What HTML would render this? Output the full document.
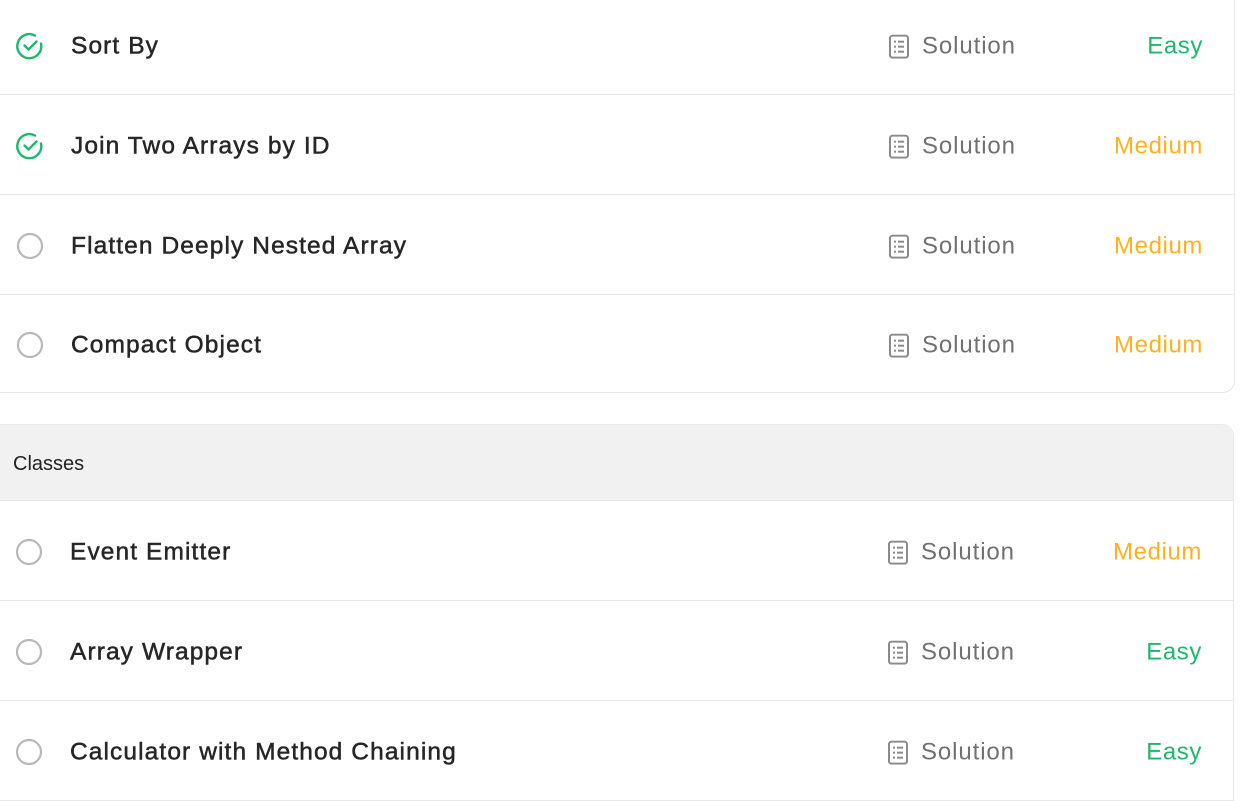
<!DOCTYPE html>
<html><head><style>
body{margin:0;width:1242px;height:790px;background:#fff;font-family:"Liberation Sans",sans-serif;overflow:hidden;position:relative}
.card{position:absolute;left:-2px;width:1235px;border:1px solid #e8e8e8;border-radius:0 0 12px 0;background:#fff}
.row{position:relative;height:99px;border-bottom:1px solid #e8e8e8}
.row:last-child{border-bottom:none}
.ic{position:absolute;left:17px;top:50%;margin-top:-13px}
.t{position:absolute;left:72px;top:50%;transform:translateY(-45%);font-size:24.5px;color:#262626;-webkit-text-stroke:0.5px #262626;letter-spacing:1.1px}
.sol{position:absolute;left:890px;top:50%;transform:translateY(-44%);font-size:24px;color:#707070;display:flex;align-items:center;letter-spacing:0.9px}
.sol svg{margin-right:13px}
.d{position:absolute;right:31px;top:50%;transform:translateY(-45%);font-size:24px;letter-spacing:0.6px}
.e{color:#1cb86b}.m{color:#ffb020}
.hd{height:75px;background:#f1f1f1;border-radius:0 12px 0 0;position:relative;border-bottom:1px solid #e8e8e8}
.hd span{position:absolute;left:15px;top:28px;font-size:20px;color:#222}
</style></head><body>
<svg width="0" height="0" style="position:absolute"><defs>
<symbol id="ok" viewBox="0 0 28 28"><path d="M25 11.5A12 12 0 1 1 19 3.6" fill="none" stroke="#1cb86b" stroke-width="2.4" stroke-linecap="round"/><path d="M8.5 13.5l4 4 8-8" fill="none" stroke="#1cb86b" stroke-width="2.4" stroke-linecap="round" stroke-linejoin="round"/></symbol>
<symbol id="no" viewBox="0 0 28 28"><circle cx="14" cy="14" r="12" fill="none" stroke="#b8b8b8" stroke-width="2.2"/></symbol>
<symbol id="doc" viewBox="0 0 20 24"><rect x="1" y="1" width="18" height="22" rx="2.5" fill="none" stroke="#8a8a8a" stroke-width="2"/><g fill="#8a8a8a"><rect x="5" y="6" width="2" height="2"/><rect x="9" y="6" width="6" height="2"/><rect x="5" y="11" width="2" height="2"/><rect x="9" y="11" width="6" height="2"/><rect x="5" y="16" width="2" height="2"/><rect x="9" y="16" width="6" height="2"/></g></symbol>
</defs></svg>

<div class="card" style="top:-5px;border-top:none">
<div class="row"><svg class="ic" width="28" height="28"><use href="#ok"/></svg><div class="t">Sort By</div><div class="sol"><svg width="20" height="24"><use href="#doc"/></svg>Solution</div><div class="d e">Easy</div></div>
<div class="row"><svg class="ic" width="28" height="28"><use href="#ok"/></svg><div class="t">Join Two Arrays by ID</div><div class="sol"><svg width="20" height="24"><use href="#doc"/></svg>Solution</div><div class="d m">Medium</div></div>
<div class="row"><svg class="ic" width="28" height="28"><use href="#no"/></svg><div class="t">Flatten Deeply Nested Array</div><div class="sol"><svg width="20" height="24"><use href="#doc"/></svg>Solution</div><div class="d m">Medium</div></div>
<div class="row" style="height:97px"><svg class="ic" width="28" height="28"><use href="#no"/></svg><div class="t">Compact Object</div><div class="sol"><svg width="20" height="24"><use href="#doc"/></svg>Solution</div><div class="d m">Medium</div></div>
</div>

<div class="card" style="top:424px;border-radius:0 12px 0 0;border-left:none">
<div class="hd"><span>Classes</span></div>
<div class="row"><svg class="ic" width="28" height="28"><use href="#no"/></svg><div class="t">Event Emitter</div><div class="sol"><svg width="20" height="24"><use href="#doc"/></svg>Solution</div><div class="d m">Medium</div></div>
<div class="row"><svg class="ic" width="28" height="28"><use href="#no"/></svg><div class="t">Array Wrapper</div><div class="sol"><svg width="20" height="24"><use href="#doc"/></svg>Solution</div><div class="d e">Easy</div></div>
<div class="row"><svg class="ic" width="28" height="28"><use href="#no"/></svg><div class="t">Calculator with Method Chaining</div><div class="sol"><svg width="20" height="24"><use href="#doc"/></svg>Solution</div><div class="d e">Easy</div></div>
</div>
</body></html>
